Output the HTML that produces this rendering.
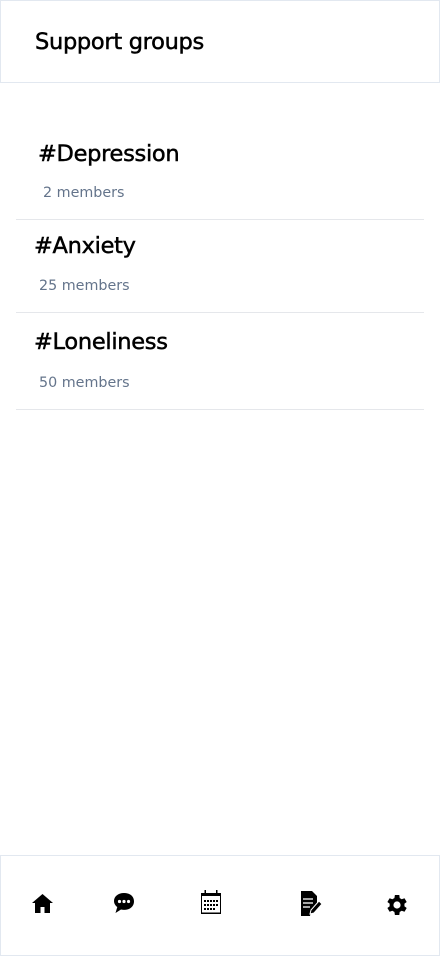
<!DOCTYPE html>
<html><head><meta charset="utf-8"><style>
*{margin:0;padding:0;box-sizing:border-box}
body{width:440px;height:956px;background:#fff;font-family:"DejaVu Sans","Liberation Sans",sans-serif;position:relative;overflow:hidden;color:#000}
.hdr{position:absolute;left:0;top:0;width:440px;height:83px;border:1px solid #e2e8f0}
.hdr h1{position:absolute;left:34px;top:28px;font-size:22.5px;font-weight:normal;-webkit-text-stroke:0.5px #000;letter-spacing:-0.3px}
.item{position:absolute;left:16px;width:408px;border-bottom:1px solid #e5e7eb}
.item h2{position:absolute;font-size:22.5px;font-weight:normal;-webkit-text-stroke:0.5px #000;letter-spacing:-0.3px}
.item p{position:absolute;font-size:14.3px;color:#64748b}
.nav{position:absolute;left:0;top:855px;width:440px;height:101px;border:1px solid #e2e8f0}
.nav svg{position:absolute}
</style></head><body>
<div class="hdr"><h1>Support groups</h1></div>
<div class="item" style="top:120px;height:100px"><h2 style="left:22px;top:21px">#Depression</h2><p style="left:27px;top:65px">2 members</p></div>
<div class="item" style="top:220px;height:93px"><h2 style="left:18px;top:13px">#Anxiety</h2><p style="left:23px;top:58px">25 members</p></div>
<div class="item" style="top:313px;height:97px"><h2 style="left:18px;top:16px">#Loneliness</h2><p style="left:23px;top:62px">50 members</p></div>
<div class="nav">
<svg style="left:31px;top:38px" width="21" height="19" viewBox="0 0 21 19"><path d="M10.5 0L0 9h3v10h5.5v-6h4v6H18V9h3z" fill="#000"/></svg>
<svg style="left:112px;top:36px" width="22" height="22" viewBox="0 0 22 22"><path d="M11 1C5 1 1 4.5 1 9c0 2.5 1.3 4.6 3.3 6L2.5 21l5.5-3.5c1 .3 2 .4 3 .4 6 0 10-3.5 10-8.5S17 1 11 1z" fill="#000"/><circle cx="6.5" cy="9.5" r="1.6" fill="#fff"/><circle cx="11" cy="9.5" r="1.6" fill="#fff"/><circle cx="15.5" cy="9.5" r="1.6" fill="#fff"/></svg>
<svg style="left:199px;top:34px" width="22" height="25" viewBox="0 0 22 25"><rect x="1.5" y="3.5" width="19" height="20" fill="none" stroke="#000" stroke-width="1"/><rect x="1" y="3" width="20" height="3" fill="#000"/><rect x="4.5" y="0" width="1.5" height="5" fill="#000"/><rect x="16" y="0" width="1.5" height="5" fill="#000"/><g fill="#000"><rect x="4" y="10" width="2" height="2"/><rect x="7" y="10" width="2" height="2"/><rect x="10" y="10" width="2" height="2"/><rect x="13" y="10" width="2" height="2"/><rect x="16" y="10" width="2" height="2"/><rect x="4" y="14" width="2" height="2"/><rect x="7" y="14" width="2" height="2"/><rect x="10" y="14" width="2" height="2"/><rect x="13" y="14" width="2" height="2"/><rect x="16" y="14" width="2" height="2"/><rect x="4" y="18" width="2" height="2"/><rect x="7" y="18" width="2" height="2"/><rect x="10" y="18" width="2" height="2"/><rect x="13" y="18" width="2" height="2"/></g><rect x="1" y="22.5" width="20" height="1.5" fill="#000"/></svg>
<svg style="left:300px;top:35px" width="22" height="25" viewBox="0 0 22 25"><path d="M0 0h11l5 5v7l-6 8-1 5H0z" fill="#000"/><g stroke="#fff" stroke-width="1.3"><line x1="2" y1="8" x2="12" y2="8"/><line x1="2" y1="12" x2="12" y2="12"/><line x1="2" y1="16" x2="9" y2="16"/></g><path d="M18 10l3 3-8 9-4 1 1-4z" fill="#000" stroke="#fff" stroke-width="1"/></svg>
<svg style="left:384px;top:37px" width="24" height="24" viewBox="0 0 24 24"><path d="M20.4 13.2a8.5 8.5 0 000-2.4l2.3-1.8-2.2-3.8-2.8 1.1a8.5 8.5 0 00-2-1.2L15.3 2h-4.4l-.5 3.1a8.5 8.5 0 00-2 1.2L5.6 5.2 3.4 9l2.3 1.8a8.5 8.5 0 000 2.4L3.4 15l2.2 3.8 2.8-1.1a8.5 8.5 0 002 1.2l.5 3.1h4.4l.4-3.1a8.5 8.5 0 002-1.2l2.8 1.1 2.2-3.8z" transform="translate(-1 0)" fill="#000"/><circle cx="12" cy="12" r="3.6" fill="#fff"/></svg>
</div>
</body></html>
